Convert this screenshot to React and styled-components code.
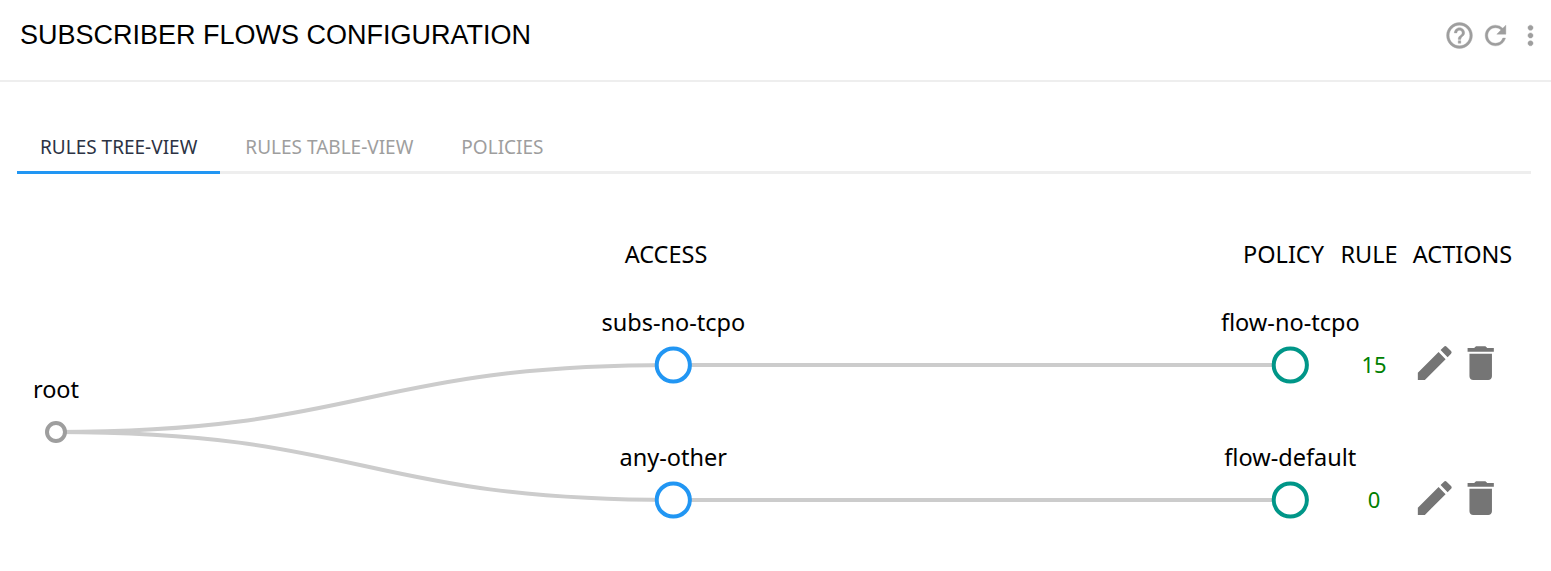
import React from 'react';
import styled, { createGlobalStyle } from 'styled-components';
import { MdDelete, MdEdit, MdHelpOutline, MdMoreVert, MdRefresh } from 'react-icons/md';

const GlobalStyle = createGlobalStyle`
  html, body {
    margin: 0;
    background: #fff;
  }
  body {
    font-family: "Noto Sans", "Open Sans", sans-serif;
    overflow: hidden;
  }
`;

const Page = styled.div`
  width: 1551px;
  height: 571px;
  display: flex;
  flex-direction: column;
`;

const Header = styled.header`
  height: 80px;
  box-sizing: content-box;
  display: flex;
  justify-content: space-between;
  align-items: flex-start;
  padding-left: 20px;
  padding-right: 5px;
  border-bottom: 2px solid #eeeeee;
`;

const Title = styled.h1`
  margin: 18px 0 0;
  font-family: "Liberation Sans", Arial, sans-serif;
  font-size: 27px;
  line-height: 34px;
  font-weight: 400;
  color: #000;
`;

const Tools = styled.div`
  display: flex;
  gap: 4.5px;
  margin-top: 20px;
  color: #9e9e9e;
  font-size: 31px;
  line-height: 0;

  & svg path:not([fill='none']) {
    stroke-width: 0.3;
  }
  & svg path[fill='none'] {
    stroke: none;
  }
`;

const TabBar = styled.nav`
  display: flex;
  margin: 40px 20px 0 17px;
  height: 49px;
  border-bottom: 3px solid #eeeeee;
`;

const Tab = styled.div`
  height: 49px;
  padding: 0 ${(p) => p.$pad}px;
  display: flex;
  align-items: center;
  font-size: 19px;
  color: ${(p) => (p.$active ? '#2c3344' : '#9e9e9e')};
  border-bottom: 3px solid ${(p) => (p.$active ? '#2196f3' : 'transparent')};
`;

const Canvas = styled.section`
  position: relative;
  flex: 1;
`;

const Links = styled.svg`
  position: absolute;
  inset: 0;
`;

const Placed = styled.div`
  position: absolute;
  left: ${(p) => p.$x}px;
  top: ${(p) => p.$y}px;
  transform: translate(-50%, -50%);
  white-space: nowrap;
`;

const ColumnTitle = styled(Placed)`
  font-size: 23.5px;
  color: #000;
`;

const NodeLabel = styled(Placed)`
  font-size: 23.5px;
  color: #000;
`;

const RuleCount = styled(Placed)`
  font-size: 22px;
  color: #008000;
`;

const Actions = styled(Placed)`
  display: flex;
  gap: 1.6px;
  color: #757575;
  font-size: 45px;
  line-height: 0;
`;

const columns = [
  { name: 'ACCESS', x: 666 },
  { name: 'POLICY', x: 1283.5 },
  { name: 'RULE', x: 1369 },
  { name: 'ACTIONS', x: 1462.5 },
];

const rows = [
  { access: 'subs-no-tcpo', policy: 'flow-no-tcpo', count: 15, y: 191 },
  { access: 'any-other', policy: 'flow-default', count: 0, y: 326 },
];

const ROOT_X = 56;
const ROOT_Y = 258;
const ACCESS_X = 673.3;
const POLICY_X = 1290.3;
const MID_X = (ROOT_X + ACCESS_X) / 2;

export default function App() {
  return (
    <Page>
      <GlobalStyle />
      <Header>
        <Title>SUBSCRIBER FLOWS CONFIGURATION</Title>
        <Tools>
          <MdHelpOutline />
          <MdRefresh />
          <MdMoreVert />
        </Tools>
      </Header>

      <TabBar>
        <Tab $active $pad={23}>RULES TREE-VIEW</Tab>
        <Tab $pad={25}>RULES TABLE-VIEW</Tab>
        <Tab $pad={23}>POLICIES</Tab>
      </TabBar>

      <Canvas>
        <Links width="1551" height="397">
          {rows.map((row) => (
            <g key={row.access} fill="none" stroke="#cccccc" strokeWidth="4">
              <path d={`M${ROOT_X},${ROOT_Y} C${MID_X},${ROOT_Y} ${MID_X},${row.y} ${ACCESS_X},${row.y}`} />
              <path d={`M${ACCESS_X},${row.y} L${POLICY_X},${row.y}`} />
            </g>
          ))}
          <circle cx={ROOT_X} cy={ROOT_Y} r="9" fill="#fff" stroke="#9e9e9e" strokeWidth="4" />
          {rows.map((row) => (
            <g key={row.policy} fill="#fff" strokeWidth="4">
              <circle cx={ACCESS_X} cy={row.y} r="16.6" stroke="#2196f3" />
              <circle cx={POLICY_X} cy={row.y} r="16.6" stroke="#009688" />
            </g>
          ))}
        </Links>

        {columns.map((col) => (
          <ColumnTitle key={col.name} $x={col.x} $y={80}>{col.name}</ColumnTitle>
        ))}

        <NodeLabel $x={ROOT_X} $y={215}>root</NodeLabel>

        {rows.map((row) => (
          <React.Fragment key={row.access}>
            <NodeLabel $x={ACCESS_X} $y={row.y - 43}>{row.access}</NodeLabel>
            <NodeLabel $x={POLICY_X} $y={row.y - 43}>{row.policy}</NodeLabel>
            <RuleCount $x={1374} $y={row.y - 1}>{row.count}</RuleCount>
            <Actions $x={1457.5} $y={row.y - 2}>
              <MdEdit />
              <MdDelete />
            </Actions>
          </React.Fragment>
        ))}
      </Canvas>
    </Page>
  );
}
